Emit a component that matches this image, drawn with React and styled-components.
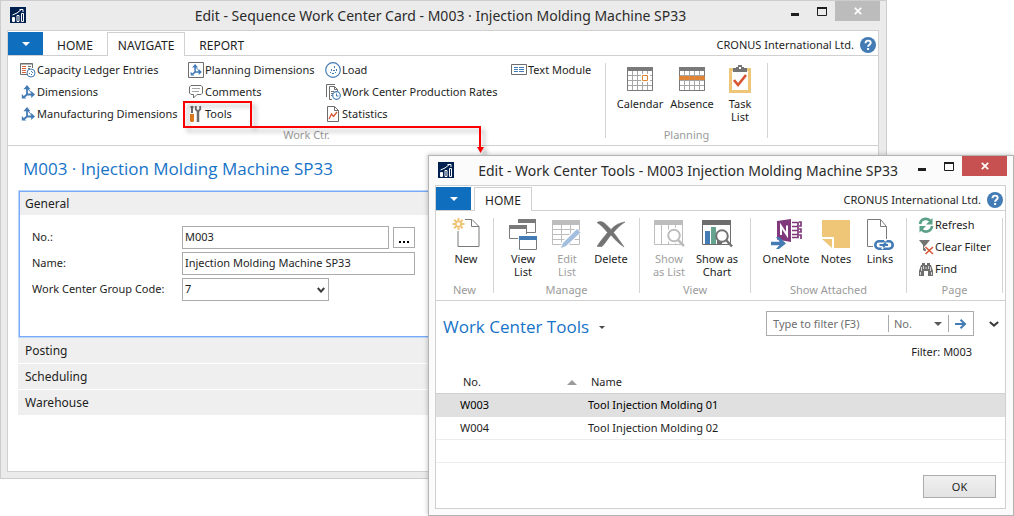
import React from "react";
import styled, { createGlobalStyle } from "styled-components";

const GlobalStyle = createGlobalStyle`
  * { box-sizing: border-box; }
  body {
    margin: 0;
    background: #fff;
    color: #1e1e1e;
    font-family: "Noto Sans", "Open Sans", sans-serif;
    font-size: 11px;
    line-height: 16px;
  }
  button, input, select { font: inherit; color: inherit; margin: 0; border-radius: 0; }
  button { padding: 0; border: 0; background: none; }
  svg { display: block; flex: none; }
`;

/* ---------- desktop and windows ---------- */

const Desktop = styled.main`
  position: relative;
  min-height: 100vh;
`;

const WindowFrame = styled.section`
  position: absolute;
  top: ${(p) => p.$top}px;
  left: ${(p) => p.$left}px;
  right: ${(p) => p.$right}px;
  padding: 0 7px 6px 6px;
  border: 1px solid ${(p) => (p.$active ? "#b4b4b4" : "#cdcdcd")};
  background: ${(p) => (p.$active ? "#fbfbfb" : "#ebebeb")};
  box-shadow: ${(p) => (p.$active ? "-1px -1px 4px rgba(0, 0, 0, 0.18)" : "none")};
`;

const TitleBar = styled.header`
  display: grid;
  grid-template-columns: 1fr auto 1fr;
  height: 29px;
  margin: 0 -1px 0 -6px;
`;

const AppMark = styled.div`
  padding: 6px 0 0 9px;
`;

const WindowTitle = styled.h1`
  margin: 0;
  font-size: 14px;
  font-weight: 400;
  line-height: 30px;
  white-space: nowrap;
  color: #2b2b2b;
`;

const WindowControls = styled.div`
  display: flex;
  justify-content: flex-end;
  align-items: flex-start;
  padding-left: 10px;
`;

const ControlButton = styled.button`
  display: flex;
  align-items: center;
  justify-content: center;
  width: ${(p) => (p.$close ? 45 : 27)}px;
  height: 20px;
  color: ${(p) => (p.$close ? "#fff" : "#1e1e1e")};
  background: ${(p) => (p.$close ? p.$close : "none")};
`;

const Client = styled.div`
  border: 1px solid #d0d0d0;
  background: #fff;
`;

/* ---------- ribbon ---------- */

const TabStrip = styled.nav`
  display: flex;
  height: 25px;
  padding-top: 1px;
  border-bottom: 1px solid #d0d0d0;
`;

const AppMenuButton = styled.button`
  display: flex;
  align-items: center;
  justify-content: center;
  width: 35px;
  height: 23px;
  margin-right: ${(p) => p.$gap || 0}px;
  background: #106ebe;
  color: #fff;
`;

const Tab = styled.button`
  height: 24px;
  padding: ${(p) => (p.$active ? "2px 10px 0" : "3px 14px 0")};
  border: ${(p) => (p.$active ? "1px solid #d0d0d0" : "0")};
  border-bottom: 0;
  background: ${(p) => (p.$active ? "#fff" : "none")};
  font-size: 12px;
  white-space: nowrap;
`;

const Company = styled.div`
  display: flex;
  align-items: center;
  gap: 6px;
  margin-left: auto;
  padding: 2px 2px 0 0;
  white-space: nowrap;
`;

const Ribbon = styled.div`
  display: flex;
  height: 90px;
  border-bottom: 1px solid #d0d0d0;
`;

const Group = styled.section`
  display: flex;
  flex-direction: column;
  width: ${(p) => p.$width}px;
  padding-bottom: 3px;
`;

const GroupBody = styled.div`
  display: flex;
  height: 72px;
  padding-left: ${(p) => p.$indent || 0}px;
`;

const GroupLabel = styled.h2`
  margin: 0;
  font-size: 11px;
  font-weight: 400;
  line-height: 14px;
  text-align: center;
  color: #9b9b9b;
`;

const Separator = styled.div`
  width: 1px;
  margin: 7px 0;
  background: #d4d4d4;
`;

const CommandGrid = styled.div`
  display: grid;
  grid-template-columns: ${(p) => p.$columns || "auto"};
  grid-template-rows: repeat(3, 22px);
  grid-auto-flow: column;
  padding-top: 3px;
`;

const Command = styled.button`
  display: flex;
  align-items: center;
  gap: 1px;
  white-space: nowrap;
`;

const CommandIcon = styled.span`
  display: flex;
  justify-content: center;
  width: 16px;
`;

const BigButton = styled.button`
  display: flex;
  flex-direction: column;
  align-items: center;
  justify-content: flex-start;
  gap: 2px;
  width: ${(p) => p.$width || 44}px;
  padding-top: 7px;
  line-height: 13px;
  color: ${(p) => (p.disabled ? "#a0a0a0" : "inherit")};
`;

const BigIcon = styled.span`
  display: flex;
  align-items: center;
  height: 32px;
`;

const BigLabel = styled.span`
  white-space: pre;
`;

/* ---------- card page ---------- */

const CardBody = styled.div`
  min-height: 325px;
  padding: 9px 10px 0;
`;

const PageTitle = styled.h2`
  margin: 0;
  font-family: "Open Sans", "Noto Sans", sans-serif;
  font-size: 17px;
  font-weight: 400;
  line-height: 28px;
  white-space: nowrap;
  color: #1673c8;
`;

const CardTitle = styled(PageTitle)`
  padding: 0 0 8px 5px;
`;

const FastTabs = styled.div`
  display: flex;
  flex-direction: column;
  gap: 1px;
`;

const FastTab = styled.section`
  border: 1px solid #78aaf5;
  box-shadow: 0 0 0 1px #bcd5fa;
  margin: 0 1px;
`;

const FastTabHeader = styled.button`
  display: block;
  width: 100%;
  height: ${(p) => (p.$open ? 23 : 25)}px;
  padding: ${(p) => (p.$open ? "0 5px" : "1px 7px 0")};
  background: #efefef;
  font-size: 12px;
  text-align: left;
`;

const FieldList = styled.div`
  display: flex;
  flex-direction: column;
  gap: 3px;
  min-height: 121px;
  padding: 11px 12px;
`;

const Field = styled.div`
  display: grid;
  grid-template-columns: 150px 233px;
  align-items: center;
  height: 23px;
`;

const FieldLabel = styled.label`
  padding-bottom: 2px;
  white-space: nowrap;
`;

const Inline = styled.div`
  display: flex;
  align-items: center;
  gap: 4px;
`;

const TextBox = styled.input`
  flex: 1;
  min-width: 0;
  height: 23px;
  padding: 0 2px 2px;
  border: 1px solid #ababab;
  background: #fff;
`;

const LookupButton = styled.button`
  display: flex;
  justify-content: center;
  align-items: flex-end;
  width: 22px;
  height: 21px;
  padding-bottom: 4px;
  border: 1px solid #ababab;
`;

const SelectWrap = styled.span`
  position: relative;
  display: flex;
  align-items: center;
  width: ${(p) => p.$width}px;
  color: #5a5a5a;

  svg {
    position: absolute;
    right: ${(p) => p.$inset || 4}px;
    pointer-events: none;
  }
`;

const BoxSelect = styled.select`
  appearance: none;
  width: 100%;
  height: 23px;
  padding: 0 2px 2px;
  border: 1px solid #ababab;
  background: #fff;
  color: #1e1e1e;
`;

/* ---------- list page ---------- */

const ListHeader = styled.div`
  display: flex;
  justify-content: space-between;
  align-items: flex-start;
  padding: 10px 6px 0 7px;
`;

const ListTitle = styled(PageTitle)`
  display: flex;
  align-items: center;
  gap: 10px;
  height: 32px;

  svg { color: #4a4a4a; }
`;

const SearchArea = styled.div`
  display: flex;
  align-items: center;
  gap: 15px;
`;

const SearchBox = styled.div`
  display: flex;
  align-items: center;
  width: 208px;
  height: 25px;
  border: 1px solid #ababab;
`;

const SearchInput = styled.input`
  flex: 1;
  min-width: 0;
  height: 17px;
  padding: 0 6px 1px;
  border: 0;
  border-right: 1px solid #ababab;
  background: none;

  &::placeholder { color: #6e6e6e; opacity: 1; }
`;

const ColumnSelect = styled.select`
  appearance: none;
  width: 100%;
  height: 17px;
  padding: 0 5px;
  border: 0;
  border-right: 1px solid #ababab;
  background: none;
  color: #6e6e6e;
`;

const GoButton = styled.button`
  display: flex;
  justify-content: center;
  width: 24px;
`;

const FilterNote = styled.p`
  margin: 0;
  padding: 1px 33px 0 0;
  line-height: 16px;
  text-align: right;
`;

const Table = styled.table`
  width: 100%;
  margin-top: 11px;
  border-collapse: separate;
  border-spacing: 0;
  table-layout: fixed;
`;

const HeadCell = styled.th`
  height: 23px;
  padding: 0 0 0 27px;
  border-bottom: 1px solid #d0d0d0;
  font-weight: 400;
  text-align: left;
  width: ${(p) => p.$width || "auto"};

  & + & { padding-left: 14px; }
`;

const Sortable = styled.span`
  display: flex;
  align-items: center;
  justify-content: space-between;

  svg { color: #9b9b9b; }
`;

const Row = styled.tr`
  background: ${(p) => (p.$selected ? "#e0e0e0" : "#fff")};
  color: ${(p) => (p.$selected ? "#000" : "inherit")};
`;

const Cell = styled.td`
  height: 23px;
  padding: 0 0 0 24px;
  border-bottom: 1px solid ${(p) => (p.$selected ? "#e0e0e0" : "#ededed")};

  & + & { padding-left: 11px; }
`;

const Footer = styled.footer`
  display: flex;
  justify-content: flex-end;
  padding: 12px 9px 10px;
`;

const OkButton = styled.button`
  width: 73px;
  height: 23px;
  border: 1px solid #acacac;
  background: linear-gradient(#f0f0f0, #e3e3e3);
`;

/* ---------- callout ---------- */

const Callout = styled.svg`
  position: absolute;
  top: 98px;
  left: 180px;
  pointer-events: none;
  filter: drop-shadow(4px 4px 2px rgba(0, 0, 0, 0.25));
`;

/* ---------- icons ---------- */

const Svg = ({ w = 16, h = w, children }) => (
  <svg width={w} height={h} viewBox={`0 0 ${w} ${h}`} fill="none" aria-hidden="true">
    {children}
  </svg>
);

const AppIcon = () => (
  <Svg>
    <rect width="16" height="16" fill="#002050" />
    <path d="M3.500 10v4.500M2.500 10.500h2v4h-2zM7 8.500h2v6H7zM11.500 6.500h2v8h-2z" stroke="#fff" />
    <path d="M2.500 8 7 6l5-4M9.500 2.500h3.500V5" stroke="#fff" />
  </Svg>
);

const MinimizeIcon = () => (
  <Svg w={8} h={9}>
    <path d="M0 7.500h8" stroke="currentColor" strokeWidth="3" />
  </Svg>
);

const MaximizeIcon = () => (
  <Svg w={10} h={9}>
    <path d="M.5 1h9v7.500h-9z" stroke="currentColor" />
    <path d="M0 1h10" stroke="currentColor" strokeWidth="2" />
  </Svg>
);

const CloseIcon = () => (
  <Svg w={8} h={8}>
    <path d="m.8.800 6.400 6.400M7.200.800.800 7.200" stroke="currentColor" strokeWidth="1.700" />
  </Svg>
);

const HelpIcon = () => (
  <Svg>
    <circle cx="8" cy="8" r="8" fill="#437bb5" />
    <path d="M5.500 6.200C5.500 4.500 6.500 3.600 8.100 3.600s2.600.9 2.600 2.200c0 2-2.600 2-2.600 4" stroke="#fff" strokeWidth="1.900" />
    <path d="M7.100 11h2v2h-2z" fill="#fff" />
  </Svg>
);

const Triangle = ({ w = 8, up }) => (
  <Svg w={w} h={w / 2}>
    <path d={up ? `M0 ${w / 2}h${w}L${w / 2} 0z` : `M0 0h${w}L${w / 2} ${w / 2}z`} fill="currentColor" />
  </Svg>
);

const Chevron = ({ w = 8 }) => (
  <Svg w={w} h={6}>
    <path d={`M.8 1 ${w / 2} 4.600 ${w - 0.8} 1`} stroke="#3c3c3c" strokeWidth="2" />
  </Svg>
);

const EllipsisIcon = () => (
  <Svg w={12} h={2}>
    <path d="M1 0h2v2H1zM5 0h2v2H5zM9 0h2v2H9z" fill="#000" />
  </Svg>
);

const LedgerIcon = () => (
  <Svg>
    <path d="M7 12.500H.5V1.500h12V6" stroke="#6d6d6d" />
    <path d="M.5 2h12" stroke="#6d6d6d" />
    <path d="M2 4.500h4M2 6.500h4M2 8.500h4M2 10.500h4" stroke="#d8623c" />
    <path d="M8 4.500h3M8 6.500h2" stroke="#6d6d6d" />
    <circle cx="11" cy="11" r="4" fill="#fff" stroke="#437bb5" />
    <path d="M9 11h1v1H9zm2 1h1v1h-1zm1-2h1v1h-1zm-1-1h1v1h-1z" fill="#437bb5" />
  </Svg>
);

const AxesShape = () => (
  <>
    <path d="M6 3v6.500h5M6 9.500 3 12" stroke="#437bb5" strokeWidth="1.800" />
    <path d="M6 0 9.500 4.200h-7zM14 9.500 10.200 13V6zM.8 13.600V9l4.400 4.600z" fill="#437bb5" />
    <path d="m7 4 4 4.500" stroke="#437bb5" />
  </>
);

const AxesIcon = () => (
  <Svg w={14} h={14}>
    <AxesShape />
  </Svg>
);

const FramedAxesIcon = () => (
  <Svg>
    <path d="M.5.500h15v15H.5z" stroke="#6d6d6d" />
    <g transform="translate(2 2) scale(.85)"><AxesShape /></g>
  </Svg>
);

const CommentIcon = () => (
  <Svg>
    <path d="M3 1.500h10l1.500 1.500v6L13 10.500H9L5.500 14v-3.500H3L1.500 9V3z" stroke="#6d6d6d" />
    <path d="M4 4.500h8M4 7.500h7" stroke="#a6a6a6" />
  </Svg>
);

const ToolsIcon = () => (
  <Svg>
    <path d="M2.500 1h3M4 0v7" stroke="#6d6d6d" strokeWidth="2" />
    <path d="M2 8h4v7l-1 1H3l-1-1z" fill="#e07b1e" />
    <path d="M10 5v11" stroke="#6d6d6d" strokeWidth="2.500" />
    <path d="M7.800 0v3.300L10 5.500l2.200-2.200V0" stroke="#6d6d6d" strokeWidth="1.800" />
  </Svg>
);

const LoadIcon = () => (
  <Svg>
    <circle cx="8" cy="8" r="7.300" stroke="#437bb5" strokeWidth="1.200" />
    <path d="M6 7h1v2H6zM9 4h1v2H9zm2 3h1v2h-1zM8 8h2v1H8zm-1 3h2v1H7zm3-1h1v1h-1zM5 10h1v1H5z" fill="#437bb5" />
  </Svg>
);

const RatesIcon = () => (
  <Svg>
    <path d="M1.500 13V.5H10" stroke="#6d6d6d" />
    <path d="M7 15.500H4.500v-13h5l3 3V7M9.500 2.500v3h3M6 7.500h3M6 9.500h2M6 11.500h1" stroke="#6d6d6d" />
    <circle cx="11.500" cy="11.500" r="3.800" fill="#fff" stroke="#437bb5" strokeWidth="1.200" />
    <path d="M11.500 9.500v2.500h2" stroke="#437bb5" />
  </Svg>
);

const StatisticsIcon = () => (
  <Svg>
    <path d="M2.500.500h7l4 4v11h-11zM9.500.500v4h4" stroke="#6d6d6d" />
    <path d="m4 13 2.500-5 2 2.500L12 6" stroke="#d8532f" strokeWidth="1.300" />
  </Svg>
);

const TextModuleIcon = () => (
  <Svg>
    <path d="M.5 2.500h15v10H.5z" stroke="#6d6d6d" />
    <path d="M3 5.500h4M3 7.500h4M3 9.500h4M8 5.500h5M8 7.500h5M8 9.500h5" stroke="#437bb5" />
  </Svg>
);

const CalendarGrid = () => (
  <>
    <path d="M.5 3.500h25v20H.5zM0 8.500h26M0 13.500h26M0 18.500h26M5.500 3v20M10.500 3v20M15.500 3v20M20.500 3v20" stroke="#a6a6a6" />
    <path d="M0 0h26v4H0z" fill="#7a7a7a" />
    <path d="M.5 3v20.500h25V3" stroke="#7a7a7a" />
  </>
);

const CalendarIcon = () => (
  <Svg w={26} h={24}>
    <CalendarGrid />
    <path d="M14 7h9v8h-9z" fill="#fff" />
    <path d="M15.500 8.500h5v5h-5z" stroke="#e28332" />
  </Svg>
);

const AbsenceIcon = () => (
  <Svg w={26} h={24}>
    <CalendarGrid />
    <path d="M1 9h4v4H1zM6 9h4v4H6zM11 9h4v4h-4zM16 9h4v4h-4zM21 9h4v4h-4z" fill="#e28332" />
    <path d="M0 9h26v4H0z" fill="#e28332" opacity=".7" />
  </Svg>
);

const TaskListIcon = () => (
  <Svg w={22} h={28}>
    <path d="M1.500 4.500h19v22h-19z" fill="#fff" stroke="#efc677" strokeWidth="3" />
    <path d="M4 3h3V2h2V0h4v2h2v1h3v4H4z" fill="#737373" />
    <path d="M10 2h2v2h-2z" fill="#fff" />
    <path d="m5 15 4 5 8-10" stroke="#d8532f" strokeWidth="2.600" />
  </Svg>
);

const NewIcon = () => (
  <Svg w={30} h={32}>
    <path d="M14 1.500h7l7 7v20H7V13M20.500 1.500v7H28" stroke="#7a7a7a" />
    <path d="M7.500 0v12M1.500 6h12M3.300 1.800l8.400 8.400M11.700 1.800l-8.400 8.400" stroke="#efc677" strokeWidth="2" />
    <circle cx="7.500" cy="6" r="2.600" fill="#fff" stroke="#efc677" strokeWidth="1.600" />
  </Svg>
);

const ViewListIcon = () => (
  <Svg w={28} h={32}>
    <path d="M9.500 5V1.500h17v13H18" stroke="#7a7a7a" />
    <path d="M9 1h18v4H9z" fill="#7a7a7a" />
    <path d="M9 20.500H.5v-13h17V16" stroke="#7a7a7a" />
    <path d="M0 7h18v4H0z" fill="#7a7a7a" />
    <path d="M10.500 18.500h17v13h-17z" fill="#fff" stroke="#7a7a7a" />
    <path d="M10 18h18v4H10z" fill="#437bb5" />
  </Svg>
);

const EditListIcon = () => (
  <Svg w={30} h={30}>
    <path d="M.5 2.500h27v23H.5zM0 10.500h28M0 15.500h28M0 20.500h28M9.500 5v20M18.500 5v20" stroke="#bdbdbd" />
    <path d="M0 1h28v5H0z" fill="#bdbdbd" />
    <path d="M11 27 27 11" stroke="#fff" strokeWidth="7" />
    <path d="m9 29 2-5L25 10l3.500 3.500L14 27z" fill="#a4bfdd" />
  </Svg>
);

const DeleteIcon = () => (
  <Svg w={28} h={30}>
    <path d="M0 3.500C6 0 10 7 14 10.500 18 6 22 4 28 3c-5 3-8.500 7-11.500 10.500C20 18 23 22 27 28c-6-4-9.500-8-13-12-3 3.500-5.500 8-9 11.500H0c3-5 7-9.500 10.500-14C7 9 4 6 0 3.500z" fill="#737373" stroke="#737373" strokeWidth=".6" />
  </Svg>
);

const ShowListIcon = () => (
  <Svg w={31} h={28}>
    <path d="M.5 1.500h28v23H.5zM7.500 5v19M14.500 5v19M21.500 5v19" stroke="#bdbdbd" />
    <path d="M0 0h29v5H0z" fill="#bdbdbd" />
    <circle cx="20" cy="15.500" r="8" fill="#fff" />
    <circle cx="20" cy="15.500" r="5.800" fill="#fff" stroke="#bdbdbd" strokeWidth="2" />
    <path d="m24 20 6 6" stroke="#bdbdbd" strokeWidth="2.500" />
  </Svg>
);

const ShowChartIcon = () => (
  <Svg w={31} h={28}>
    <path d="M.5 1.500h28v23H.5z" stroke="#6d6d6d" />
    <path d="M0 0h29v5H0z" fill="#6d6d6d" />
    <path d="M3 11h5v13H3z" fill="#437bb5" />
    <path d="M9 7h5v17H9z" fill="#66a490" />
    <path d="M15 14h5v10h-5z" fill="#6d6d6d" />
    <circle cx="20" cy="16" r="5.800" fill="#fff" stroke="#737373" strokeWidth="2" />
    <path d="m24 20 6 6.500" stroke="#737373" strokeWidth="2.500" />
  </Svg>
);

const OneNoteIcon = () => (
  <Svg w={32} h={30}>
    <path d="M7 2 21 0v23L7 20.500z" fill="#80397b" />
    <path d="M11 16V7l6 9V6.500" stroke="#fff" strokeWidth="2" />
    <path d="M22 3.500h6v15h-6M22 7.500h6M22 11.500h6M22 15.500h6M29 3h2v4h-2M29 10h2v3h-2M29 16h2v4" stroke="#80397b" strokeWidth="1.700" />
    <path d="M1 24.500h12" stroke="#437bb5" strokeWidth="3.500" />
    <path d="m9 18 7 6.500L9 30H6l5-5.500L6 18z" fill="#437bb5" />
  </Svg>
);

const NotesIcon = () => (
  <Svg w={28} h={28}>
    <path d="M0 0h28v28H12V17H0z" fill="#efc677" />
    <path d="M0 19h10v9z" fill="#efc677" />
  </Svg>
);

const LinksIcon = () => (
  <Svg w={28} h={31}>
    <path d="M7 27.500H1.500V.5h13l6 7V20M14.500.500v7h6" stroke="#7a7a7a" />
    <rect x="9.300" y="22.300" width="17.400" height="7.400" rx="3.700" fill="#fff" stroke="#437bb5" strokeWidth="2.600" />
    <path d="m16 30 1.500-2.500M18.500 22l2-1.500" stroke="#fff" strokeWidth="2" />
    <path d="M13.500 26h3.500l3-2M22 26h-3l-2 2" stroke="#437bb5" strokeWidth="2" />
  </Svg>
);

const RefreshIcon = () => (
  <Svg>
    <path d="M2 7a6 6 0 0 1 10.500-3" stroke="#5aa088" strokeWidth="2.600" />
    <path d="M14.500 1v6.500H8z" fill="#5aa088" />
    <path d="M14 9A6 6 0 0 1 3.500 12.500" stroke="#5aa088" strokeWidth="2.600" />
    <path d="M1.500 15.500V9H8z" fill="#5aa088" />
  </Svg>
);

const ClearFilterIcon = () => (
  <Svg>
    <path d="M1 1h11L8 6v7l-3-2V6z" fill="#737373" />
    <path d="m7 7 8 8M15 7l-8 8" stroke="#fff" strokeWidth="3.500" />
    <path d="m7.500 8 7.500 7M15 8l-7.500 7" stroke="#d8532f" strokeWidth="1.500" />
  </Svg>
);

const FindIcon = () => (
  <Svg>
    <path d="M3 3h1V1h3v2h2V1h3v2h1l2 6v5h-5V9H6v5H1V9z" fill="#6d6d6d" transform="translate(0 1)" />
    <path d="M3.500 6v4M5.500 5v3M10.500 5v3M12.500 6v4M8 6v2M2.500 11v3M13.500 11v3" stroke="#fff" strokeWidth=".7" />
  </Svg>
);

const GoArrow = () => (
  <Svg w={12} h={10}>
    <path d="M0 5h10M5.500.800 10 5 5.500 9.200" stroke="#437bb5" strokeWidth="2" />
  </Svg>
);

/* ---------- shared pieces ---------- */

const TitleRow = ({ title, closeColor }) => (
  <TitleBar>
    <AppMark><AppIcon /></AppMark>
    <WindowTitle>{title}</WindowTitle>
    <WindowControls>
      <ControlButton aria-label="Minimize"><MinimizeIcon /></ControlButton>
      <ControlButton aria-label="Maximize"><MaximizeIcon /></ControlButton>
      <ControlButton aria-label="Close" $close={closeColor}><CloseIcon /></ControlButton>
    </WindowControls>
  </TitleBar>
);

const CompanyInfo = () => (
  <Company>
    CRONUS International Ltd.
    <button aria-label="Help"><HelpIcon /></button>
  </Company>
);

const Cmd = ({ icon, children }) => (
  <Command>
    <CommandIcon>{icon}</CommandIcon>
    {children}
  </Command>
);

const Big = ({ icon, label, width, disabled }) => (
  <BigButton $width={width} disabled={disabled}>
    <BigIcon>{icon}</BigIcon>
    <BigLabel>{label}</BigLabel>
  </BigButton>
);

const RibbonGroup = ({ label, width, indent, children }) => (
  <>
    <Group $width={width}>
      <GroupBody $indent={indent}>{children}</GroupBody>
      <GroupLabel>{label}</GroupLabel>
    </Group>
    <Separator />
  </>
);

const rows = [
  { no: "W003", name: "Tool Injection Molding 01", selected: true },
  { no: "W004", name: "Tool Injection Molding 02" },
  { no: "", name: "" },
];

const CardWindow = () => (
  <WindowFrame $top={0} $left={0} $right={127}>
    <TitleRow title="Edit - Sequence Work Center Card - M003 · Injection Molding Machine SP33" closeColor="#bcbcbc" />
    <Client>
      <TabStrip>
        <AppMenuButton aria-label="Application menu"><Triangle /></AppMenuButton>
        <Tab>HOME</Tab>
        <Tab $active>NAVIGATE</Tab>
        <Tab>REPORT</Tab>
        <CompanyInfo />
      </TabStrip>
      <Ribbon>
        <RibbonGroup label="Work Ctr." width={597} indent={12}>
          <CommandGrid $columns="168px 137px 186px auto">
            <Cmd icon={<LedgerIcon />}>Capacity Ledger Entries</Cmd>
            <Cmd icon={<AxesIcon />}>Dimensions</Cmd>
            <Cmd icon={<AxesIcon />}>Manufacturing Dimensions</Cmd>
            <Cmd icon={<FramedAxesIcon />}>Planning Dimensions</Cmd>
            <Cmd icon={<CommentIcon />}>Comments</Cmd>
            <Cmd icon={<ToolsIcon />}>Tools</Cmd>
            <Cmd icon={<LoadIcon />}>Load</Cmd>
            <Cmd icon={<RatesIcon />}>Work Center Production Rates</Cmd>
            <Cmd icon={<StatisticsIcon />}>Statistics</Cmd>
            <Cmd icon={<TextModuleIcon />}>Text Module</Cmd>
          </CommandGrid>
        </RibbonGroup>
        <RibbonGroup label="Planning" width={161} indent={8}>
          <Big icon={<CalendarIcon />} label="Calendar" width={52} />
          <Big icon={<AbsenceIcon />} label="Absence" width={52} />
          <Big icon={<TaskListIcon />} label={"Task\nList"} />
        </RibbonGroup>
      </Ribbon>
      <CardBody>
        <CardTitle>M003 · Injection Molding Machine SP33</CardTitle>
        <FastTabs>
          <FastTab>
            <FastTabHeader $open>General</FastTabHeader>
            <FieldList>
              <Field>
                <FieldLabel htmlFor="no">No.:</FieldLabel>
                <Inline>
                  <TextBox id="no" defaultValue="M003" />
                  <LookupButton aria-label="Look up number"><EllipsisIcon /></LookupButton>
                </Inline>
              </Field>
              <Field>
                <FieldLabel htmlFor="name">Name:</FieldLabel>
                <TextBox id="name" defaultValue="Injection Molding Machine SP33" />
              </Field>
              <Field>
                <FieldLabel htmlFor="group">Work Center Group Code:</FieldLabel>
                <SelectWrap $width={147}>
                  <BoxSelect id="group" defaultValue="7">
                    <option>7</option>
                  </BoxSelect>
                  <Chevron />
                </SelectWrap>
              </Field>
            </FieldList>
          </FastTab>
          <FastTabHeader>Posting</FastTabHeader>
          <FastTabHeader>Scheduling</FastTabHeader>
          <FastTabHeader>Warehouse</FastTabHeader>
        </FastTabs>
      </CardBody>
    </Client>
  </WindowFrame>
);

const ToolsWindow = () => (
  <WindowFrame $active $top={155} $left={428} $right={0}>
    <TitleRow title="Edit - Work Center Tools - M003 Injection Molding Machine SP33" closeColor="#c75050" />
    <Client>
      <TabStrip>
        <AppMenuButton aria-label="Application menu" $gap={3}><Triangle /></AppMenuButton>
        <Tab $active>HOME</Tab>
        <CompanyInfo />
      </TabStrip>
      <Ribbon>
        <RibbonGroup label="New" width={57} indent={8}>
          <Big icon={<NewIcon />} label="New" />
        </RibbonGroup>
        <RibbonGroup label="Manage" width={145} indent={7}>
          <Big icon={<ViewListIcon />} label={"View\nList"} />
          <Big icon={<EditListIcon />} label={"Edit\nList"} disabled />
          <Big icon={<DeleteIcon />} label="Delete" />
        </RibbonGroup>
        <RibbonGroup label="View" width={110} indent={5}>
          <Big icon={<ShowListIcon />} label={"Show\nas List"} width={48} disabled />
          <Big icon={<ShowChartIcon />} label={"Show as\nChart"} width={48} />
        </RibbonGroup>
        <RibbonGroup label="Show Attached" width={155} indent={7}>
          <Big icon={<OneNoteIcon />} label="OneNote" width={56} />
          <Big icon={<NotesIcon />} label="Notes" />
          <Big icon={<LinksIcon />} label="Links" />
        </RibbonGroup>
        <RibbonGroup label="Page" width={95} indent={11}>
          <CommandGrid>
            <Cmd icon={<RefreshIcon />}>Refresh</Cmd>
            <Cmd icon={<ClearFilterIcon />}>Clear Filter</Cmd>
            <Cmd icon={<FindIcon />}>Find</Cmd>
          </CommandGrid>
        </RibbonGroup>
      </Ribbon>
      <ListHeader>
        <ListTitle>
          Work Center Tools
          <Triangle w={6} />
        </ListTitle>
        <SearchArea>
          <SearchBox>
            <SearchInput aria-label="Filter text" placeholder="Type to filter (F3)" />
            <SelectWrap $width={60} $inset={7}>
              <ColumnSelect aria-label="Filter column" defaultValue="No.">
                <option>No.</option>
                <option>Name</option>
              </ColumnSelect>
              <Triangle />
            </SelectWrap>
            <GoButton aria-label="Apply filter"><GoArrow /></GoButton>
          </SearchBox>
          <button aria-label="Expand filter pane"><Chevron w={10} /></button>
        </SearchArea>
      </ListHeader>
      <FilterNote>Filter: M003</FilterNote>
      <Table>
        <thead>
          <tr>
            <HeadCell $width="141px">
              <Sortable>No. <Triangle w={10} up /></Sortable>
            </HeadCell>
            <HeadCell>Name</HeadCell>
          </tr>
        </thead>
        <tbody>
          {rows.map((r, i) => (
            <Row key={i} $selected={r.selected}>
              <Cell $selected={r.selected}>{r.no}</Cell>
              <Cell $selected={r.selected}>{r.name}</Cell>
            </Row>
          ))}
        </tbody>
      </Table>
      <Footer>
        <OkButton>OK</OkButton>
      </Footer>
    </Client>
  </WindowFrame>
);

export default function App() {
  return (
    <>
      <GlobalStyle />
      <Desktop>
        <CardWindow />
        <Callout width="310" height="60" viewBox="0 0 310 60" fill="none" aria-hidden="true">
          <path d="M4 4h67v25H4z" stroke="#fa0000" strokeWidth="2" />
          <path d="M71 29h229v20" stroke="#fa0000" strokeWidth="2" />
          <path d="M297 49h7l-3.500 6z" fill="#fa0000" />
        </Callout>
        <ToolsWindow />
      </Desktop>
    </>
  );
}
